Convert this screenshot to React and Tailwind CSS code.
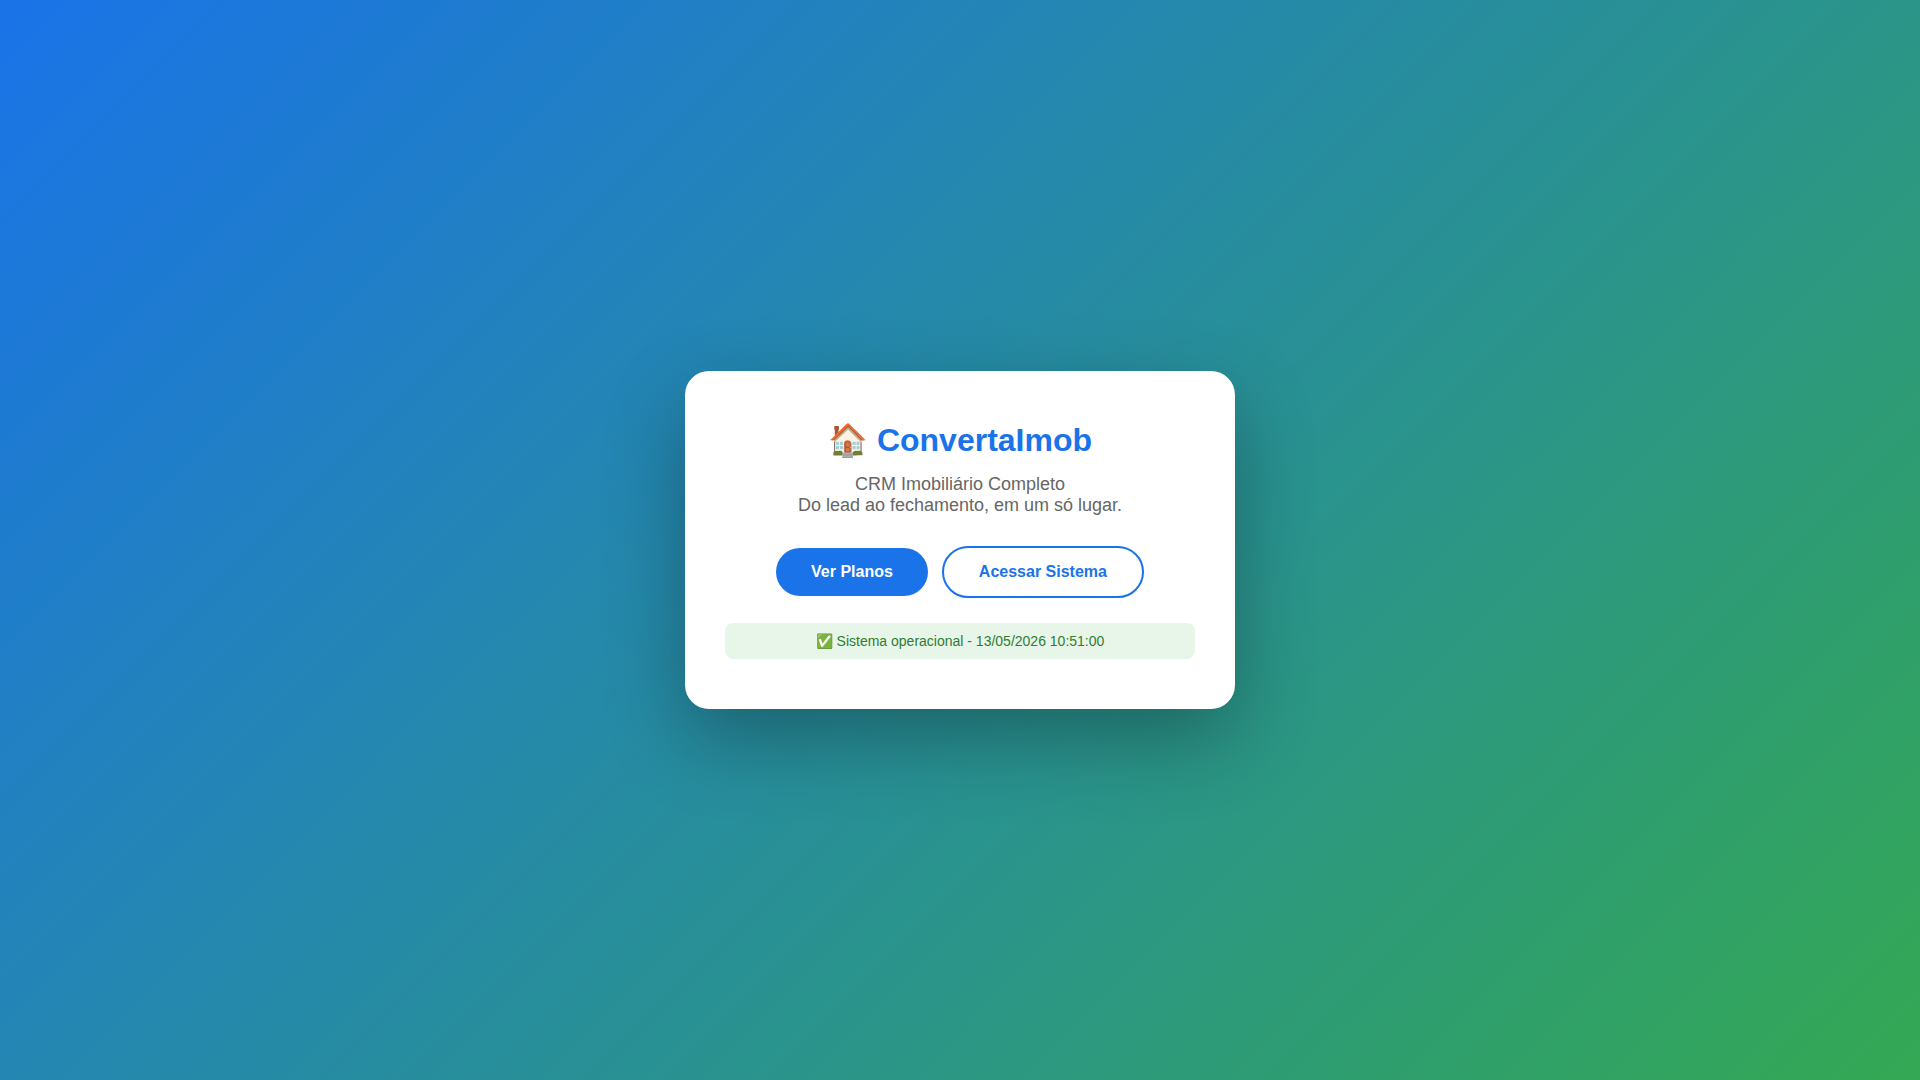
import React from 'react';

const App = () => {
  const status = 'Sistema operacional - 13/05/2026 10:51:00';

  return (
    <div className="min-h-screen flex items-center justify-center bg-[linear-gradient(135deg,#1a73e8,#34a853)] font-['Liberation_Sans',Arial,sans-serif]">
      <main className="w-full max-w-[550px] bg-white rounded-3xl px-10 py-[50px] text-center shadow-[0_30px_80px_rgba(0,0,0,0.3)]">
        <h1 className="mb-[15px] text-[32px] leading-[38px] font-bold text-[#1a73e8]">
          🏠 ConvertaImob
        </h1>
        <p className="mb-[30px] text-lg leading-[21px] text-[#666]">
          CRM Imobiliário Completo
          <br />
          Do lead ao fechamento, em um só lugar.
        </p>

        {/* Ações principais */}
        <div className="flex flex-wrap items-center justify-center gap-3.5">
          <a
            href="/planos"
            className="rounded-full bg-[#1a73e8] px-[35px] py-[15px] text-base leading-[18px] font-bold text-white"
          >
            Ver Planos
          </a>
          <a
            href="/login"
            className="rounded-full border-2 border-[#1a73e8] bg-white px-[35px] py-[15px] text-base leading-[18px] font-bold text-[#1a73e8]"
          >
            Acessar Sistema
          </a>
        </div>

        <div className="mt-[25px] rounded-lg bg-[#e8f5e9] p-2.5 text-sm leading-4 text-[#2e7d32]">
          ✅ {status}
        </div>
      </main>
    </div>
  );
};

export default App;
